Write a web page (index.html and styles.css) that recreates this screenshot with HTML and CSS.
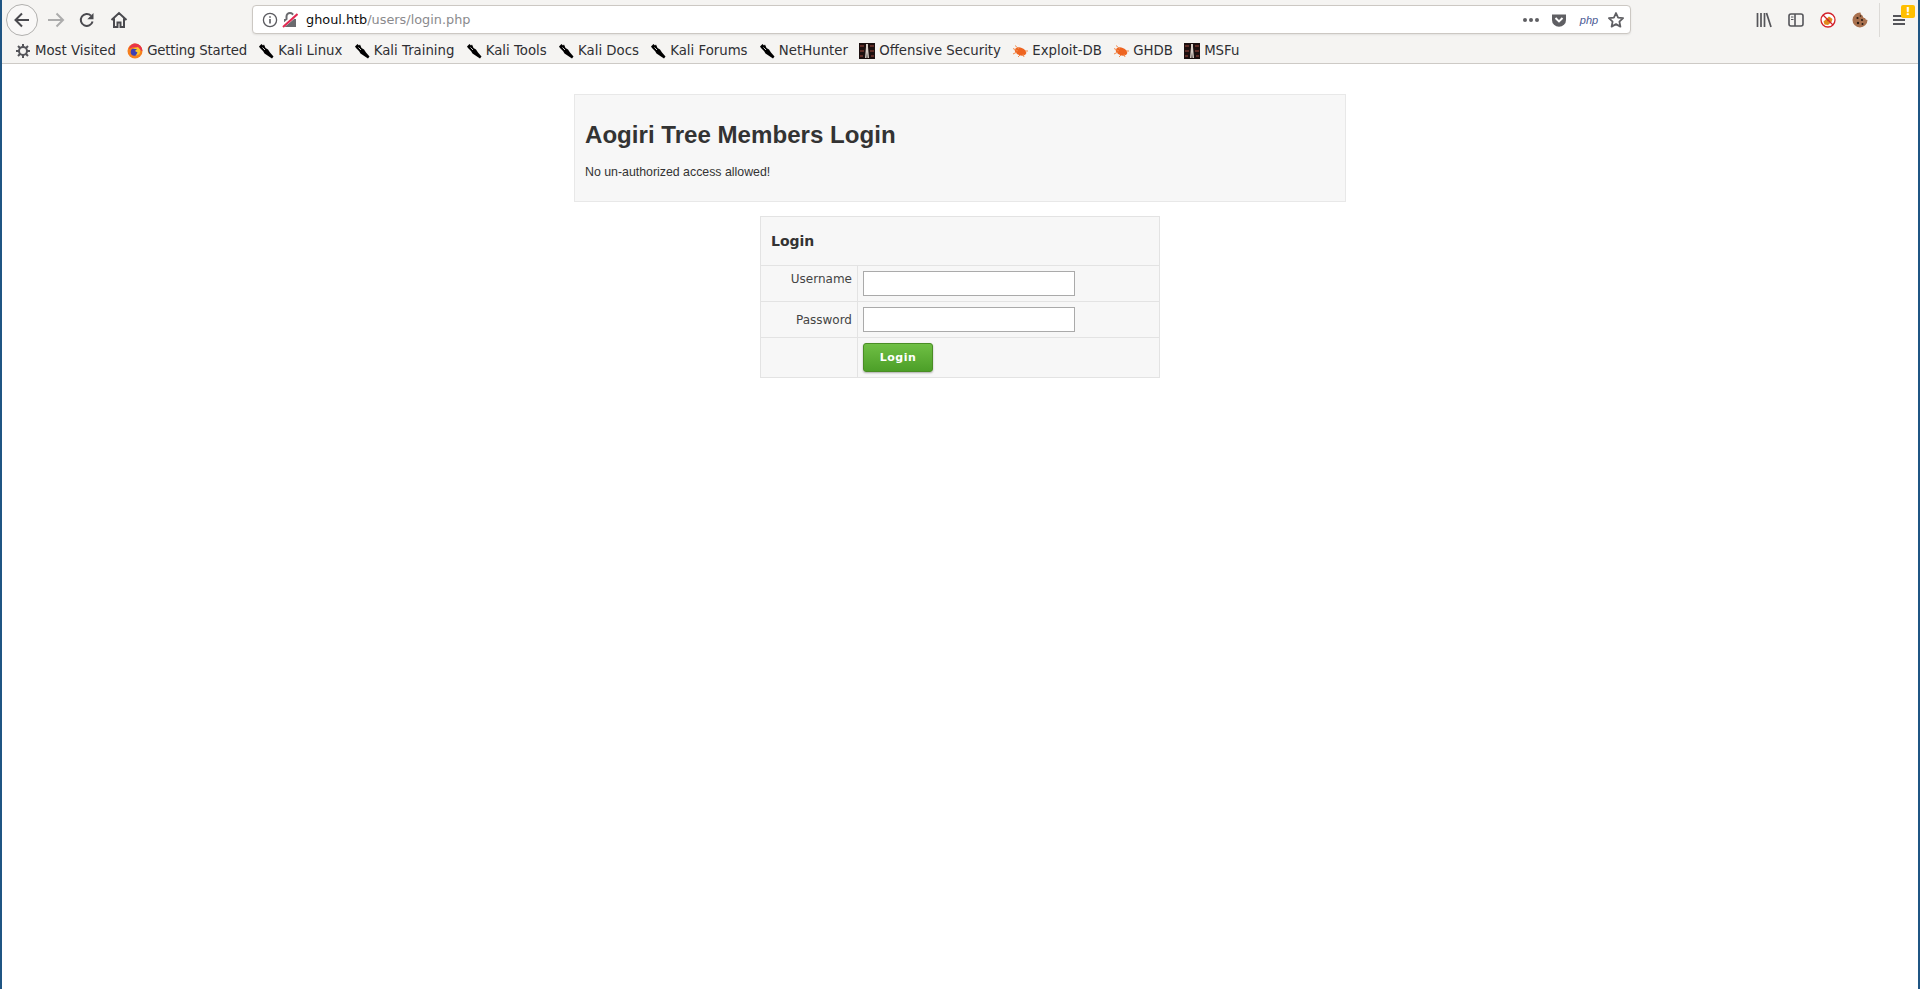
FILE: index.html
```html
<!DOCTYPE html>
<html lang="en">
<head>
  <meta charset="UTF-8">
  <title>Aogiri Tree Members Login</title>
  <link rel="stylesheet" href="styles.css">
</head>
<body>
  <!-- Shared bookmark icons -->
  <svg class="icon-defs" width="0" height="0">
    <symbol id="kali" viewBox="0 0 16 16">
      <path d="M1 3.500L3.500 1 5 2.500 6 1.500 7.500 5 10 6.500 12 9.500 15.500 13.500 14 15.500 9.500 12.500 6.500 10.500 5 8 3.500 6.500 2 5z" fill="#000"/>
      <path d="M4.500 4.500L7 7" stroke="#fff" stroke-width=".8"/>
    </symbol>
    <symbol id="offsec" viewBox="0 0 16 16">
      <rect width="16" height="16" fill="#1c1010"/>
      <path d="M7 1h2v3l1 11H8.500L8 9l-.5 6H6L7 4z" fill="#d8cfc8"/>
      <path d="M1 2h4v2H1zM11 2h4v2h-4zM1 7h4v2H1zM11 7h4v2h-4zM1 12h3v2H1zM12 12h3v2h-3z" fill="#5e2c26"/>
    </symbol>
    <symbol id="bug" viewBox="0 0 16 16">
      <ellipse cx="8.500" cy="8.500" rx="6" ry="3.800" fill="#ee6420" transform="rotate(20 8.500 8.500)"/>
      <path d="M1 5.500L6 8M3 2.500L7 6M1 11l4-2M6 14l2-2M12 14l-1-3M16 8l-3 0" stroke="#f28a4c" stroke-width="1"/>
    </symbol>
  </svg>

  <div class="chrome">
    <!-- Navigation toolbar -->
    <div class="nav-bar">
      <div class="back-btn">
        <svg width="18" height="18" viewBox="0 0 18 18"><path d="M16 9H2.500M9 2.500L2.500 9 9 15.500" fill="none" stroke="#4a4a4f" stroke-width="2"/></svg>
      </div>
      <svg class="nav-icon" width="18" height="18" viewBox="0 0 18 18"><path d="M1 9h15M9.500 2.500L16 9l-6.500 6.500" fill="none" stroke="#acacac" stroke-width="2"/></svg>
      <svg class="nav-icon" width="16" height="16" viewBox="0 0 16 16"><path d="M13.600 9.500A6 6 0 1 1 12 3.600" fill="none" stroke="#4a4a4f" stroke-width="2"/><path d="M14.500 1v6.200H8.300z" fill="#4a4a4f"/></svg>
      <svg class="nav-icon" width="18" height="18" viewBox="0 0 18 18"><path d="M1.500 9L9 2l7.500 7M4 7.500V16h3.500v-4.500h3V16H14V7.500" fill="none" stroke="#4a4a4f" stroke-width="2"/></svg>
      <div class="url-bar">
        <svg class="url-info" width="16" height="16" viewBox="0 0 16 16"><circle cx="8" cy="8" r="6.600" fill="none" stroke="#5a5a5f" stroke-width="1.300"/><path d="M8 7v4.500M8 4.200v1.600" stroke="#5a5a5f" stroke-width="1.600"/></svg>
        <svg class="url-lock" width="16" height="16" viewBox="0 0 16 16"><path d="M2 7h12v8H2z" fill="#6a6a6e"/><path d="M4.500 7V4.500a3.500 3.500 0 0 1 7 0V7" fill="none" stroke="#6a6a6e" stroke-width="2"/><path d="M0 14.500L15 2" stroke="#fff" stroke-width="4"/><path d="M1 15L15.500 2" stroke="#e22850" stroke-width="2"/></svg>
        <div class="url-text"><span class="url-host">ghoul.htb</span>/users/login.php</div>
        <div class="url-dots"><i></i><i></i><i></i></div>
        <svg class="url-pocket" width="16" height="16" viewBox="0 0 16 16"><path d="M1 2.500h14V8A7 6.800 0 0 1 1 8z" fill="#5f5f63"/><path d="M4.500 6L8 9.400 11.500 6" fill="none" stroke="#fff" stroke-width="2"/></svg>
        <span class="url-php">php</span>
        <svg class="url-star" width="18" height="18" viewBox="0 0 18 18"><path d="M9 2l2.100 4.600 5 .6-3.700 3.400 1 5L9 13.100 4.600 15.600l1-5L1.900 7.200l5-.6z" fill="none" stroke="#5f5f63" stroke-width="1.800" stroke-linejoin="round"/></svg>
      </div>
      <div class="tools">
        <svg width="16" height="16" viewBox="0 0 16 16"><path d="M1.500 1v14M5 1v14M8.500 1v14M10.500 1l4.500 14" fill="none" stroke="#55555a" stroke-width="1.700"/></svg>
        <svg width="16" height="14" viewBox="0 0 16 14"><rect x="1" y="1" width="14" height="12" rx="2" fill="none" stroke="#55555a" stroke-width="1.600"/><path d="M7 1v12" stroke="#55555a" stroke-width="1.600"/><path d="M3 4h2.500M3 6.500h2.500" stroke="#55555a"/></svg>
        <svg width="16" height="16" viewBox="0 0 16 16"><circle cx="8" cy="8" r="7" fill="#fff"/><path d="M3.500 9.500L9 4.500l1.500 1 2 1.500-1 3-3.500 3-3.500-.5z" fill="#e08a1e"/><path d="M7 9l2.500-2" stroke="#a86410"/><circle cx="8" cy="8" r="7" fill="none" stroke="#d3202a" stroke-width="1.300"/><path d="M3 3l10 10" stroke="#d3202a" stroke-width="1.300"/></svg>
        <svg width="16" height="16" viewBox="0 0 16 16"><path d="M8.500 .5A7.500 7.500 0 1 0 15.500 8c-1.500 0-2.200-.8-2.400-2-1.500 0-2.300-.8-2.300-2.300C9.500 3.500 8.500 2 8.500 .5z" fill="#a8704e"/><circle cx="5.500" cy="6" r="1.100" fill="#2c1c14"/><circle cx="10" cy="8" r="1.100" fill="#2c1c14"/><circle cx="6" cy="11" r="1.200" fill="#2c1c14"/><circle cx="10.500" cy="12" r="1" fill="#2c1c14"/><circle cx="8.500" cy="4" r=".8" fill="#2c1c14"/></svg>
      </div>
      <div class="menu-btn">
        <svg width="14" height="12" viewBox="0 0 14 12"><path d="M1 2h12M1 6h12M1 10h12" stroke="#55555a" stroke-width="1.800"/></svg>
        <span class="menu-badge">!</span>
      </div>
    </div>

    <!-- Bookmarks -->
    <div class="bookmarks">
      <div class="bookmark">
        <svg width="16" height="16" viewBox="0 0 16 16"><path d="M8 1v14M1 8h14M3 3l10 10M13 3L3 13" stroke="#55555a" stroke-width="2"/><circle cx="8" cy="8" r="4" fill="#f5f4f2" stroke="#55555a" stroke-width="2"/></svg>
        Most Visited
      </div>
      <div class="bookmark bookmark-tight">
        <svg width="16" height="16" viewBox="0 0 16 16"><circle cx="8" cy="8" r="7.500" fill="#f6801e"/><path d="M8 .5A7.500 7.500 0 0 1 15.500 8L12 7 9 4 5 4.500 2 6C2.500 3 5 .5 8 .5z" fill="#e8344a"/><circle cx="7.500" cy="9" r="3.800" fill="#3d3fb5"/><path d="M5 6h5l-2 2 2.500 1.500-2 3.500 4-2 1-4-2.500-3z" fill="#fcc62e"/></svg>
        Getting Started
      </div>
      <div class="bookmark"><svg width="16" height="16"><use href="#kali"/></svg>Kali Linux</div>
      <div class="bookmark"><svg width="16" height="16"><use href="#kali"/></svg>Kali Training</div>
      <div class="bookmark"><svg width="16" height="16"><use href="#kali"/></svg>Kali Tools</div>
      <div class="bookmark"><svg width="16" height="16"><use href="#kali"/></svg>Kali Docs</div>
      <div class="bookmark"><svg width="16" height="16"><use href="#kali"/></svg>Kali Forums</div>
      <div class="bookmark"><svg width="16" height="16"><use href="#kali"/></svg>NetHunter</div>
      <div class="bookmark"><svg width="16" height="16"><use href="#offsec"/></svg>Offensive Security</div>
      <div class="bookmark"><svg width="16" height="16"><use href="#bug"/></svg>Exploit-DB</div>
      <div class="bookmark"><svg width="16" height="16"><use href="#bug"/></svg>GHDB</div>
      <div class="bookmark"><svg width="16" height="16"><use href="#offsec"/></svg>MSFu</div>
    </div>
  </div>

  <div class="page">
    <div class="hero">
      <h1>Aogiri Tree Members Login</h1>
      <p>No un-authorized access allowed!</p>
    </div>

    <form>
      <table class="login-table">
        <thead>
          <tr><th colspan="2">Login</th></tr>
        </thead>
        <tbody>
          <tr>
            <td class="label-cell label-user"><label for="username">Username</label></td>
            <td><input type="text" id="username"></td>
          </tr>
          <tr>
            <td class="label-cell label-mid"><label for="password">Password</label></td>
            <td><input type="password" id="password"></td>
          </tr>
          <tr>
            <td class="label-cell"></td>
            <td><button type="button" class="login-btn">Login</button></td>
          </tr>
        </tbody>
      </table>
    </form>
  </div>
</body>
</html>
```

FILE: styles.css
```css
html, body {
  height: 100%;
}
body {
  margin: 0;
  box-sizing: border-box;
  background: #fff;
  border-left: 2px solid #1f5583;
  border-right: 2px solid #1f5583;
  font-family: "DejaVu Sans", sans-serif;
  color: #333;
}
.icon-defs {
  display: block;
  height: 0;
}
.chrome {
  background: #f5f4f2;
  border-bottom: 1px solid #cdcac6;
  height: 63px;
}
.nav-bar {
  display: flex;
  align-items: center;
  height: 39px;
  padding-left: 4px;
}
.back-btn {
  width: 32px;
  height: 32px;
  box-sizing: border-box;
  border: 1px solid #b1b0ae;
  border-radius: 50%;
  background: #f9f8f7;
  display: flex;
  align-items: center;
  justify-content: center;
  margin-right: 9px;
}
.nav-icon {
  margin-right: 14px;
}
.nav-icon + .nav-icon {
  margin-right: 15px;
}
.nav-icon + .nav-icon + .nav-icon {
  margin-right: 0;
}
.url-bar {
  display: flex;
  align-items: center;
  width: 1379px;
  height: 29px;
  margin-left: 124px;
  padding: 0 6px 0 9px;
  box-sizing: border-box;
  background: #fff;
  border: 1px solid #ccc8c3;
  border-radius: 4px;
  box-shadow: 0 1px 2px rgba(0,0,0,.08);
}
.url-info {
  margin-right: 4px;
}
.url-lock {
  margin-right: 8px;
}
.url-text {
  flex: 1;
  font-size: 12.850px;
  color: #8a8a8d;
}
.url-host {
  color: #0c0c0d;
}
.url-dots {
  display: flex;
  gap: 2px;
  margin-right: 12px;
}
.url-dots i {
  width: 4px;
  height: 4px;
  border-radius: 50%;
  background: #5f5f63;
}
.url-pocket {
  margin-right: 10px;
}
.url-php {
  font-family: "Liberation Sans", sans-serif;
  font-style: italic;
  font-size: 11px;
  color: #4a5a94;
  width: 24px;
  text-align: center;
  margin-right: 6px;
}
.url-star {
  margin-right: -1px;
}
.tools {
  display: flex;
  align-items: center;
  gap: 16px;
  margin-left: 125px;
  padding-right: 11px;
}
.menu-btn {
  position: relative;
  display: flex;
  align-items: center;
  height: 34px;
  padding-left: 12px;
  border-left: 1px solid #dcdad7;
}
.menu-badge {
  position: absolute;
  top: 2px;
  left: 21px;
  width: 14px;
  height: 13px;
  border-radius: 2px;
  background: #ffbf00;
  color: #fff;
  font-size: 11px;
  font-weight: bold;
  line-height: 13px;
  text-align: center;
}
.bookmarks {
  display: flex;
  align-items: center;
  height: 24px;
  box-sizing: border-box;
  padding: 0 0 1px 13px;
  gap: 11.300px;
}
.bookmark {
  display: flex;
  align-items: center;
  gap: 4px;
  font-size: 13.300px;
  color: #2f2f32;
  white-space: nowrap;
}
.bookmark-tight {
  letter-spacing: -.2px;
}
.page {
  padding-top: 30px;
}
.hero {
  width: 772px;
  height: 108px;
  box-sizing: border-box;
  margin: 0 auto 14px;
  padding: 24px 10px 0;
  background: #f7f7f7;
  border: 1px solid #e8e8e8;
  font-family: "Liberation Sans", sans-serif;
}
.hero h1 {
  margin: 0;
  font-size: 24.100px;
  line-height: 32px;
  color: #333;
}
.hero p {
  margin: 13px 0 0;
  font-size: 12.350px;
  line-height: 16px;
  color: #333;
}
.login-table {
  width: 400px;
  margin: 0 auto;
  border-collapse: collapse;
  background: #f7f7f7;
  font-size: 12px;
}
.login-table th, .login-table td {
  border: 1px solid #e3e3e3;
  padding: 5px;
  text-align: left;
}
.login-table th {
  height: 38px;
  padding: 5px 10px;
  font-size: 14px;
  color: #333;
}
.login-table td {
  height: 25px;
}
.login-table td.label-cell {
  width: 86px;
  text-align: right;
  vertical-align: top;
  color: #444;
}
.login-table td.label-user {
  padding-top: 6px;
  padding-bottom: 4px;
}
.login-table td.label-mid {
  vertical-align: middle;
}
.login-table input {
  display: block;
  width: 212px;
  height: 25px;
  box-sizing: border-box;
  margin: 0;
  padding: 2px;
  background: #fff;
  border: 1px solid #aaa;
}
.login-btn {
  display: block;
  width: 70px;
  height: 29px;
  margin: 0;
  padding: 0;
  border: 1px solid #4a8d25;
  border-radius: 3px;
  background: linear-gradient(#6fbf44, #4c9f28);
  box-shadow: 0 1px 2px rgba(0,0,0,.3);
  color: #fff;
  font-family: "DejaVu Sans", sans-serif;
  font-size: 11px;
  font-weight: bold;
  letter-spacing: .5px;
}
```
